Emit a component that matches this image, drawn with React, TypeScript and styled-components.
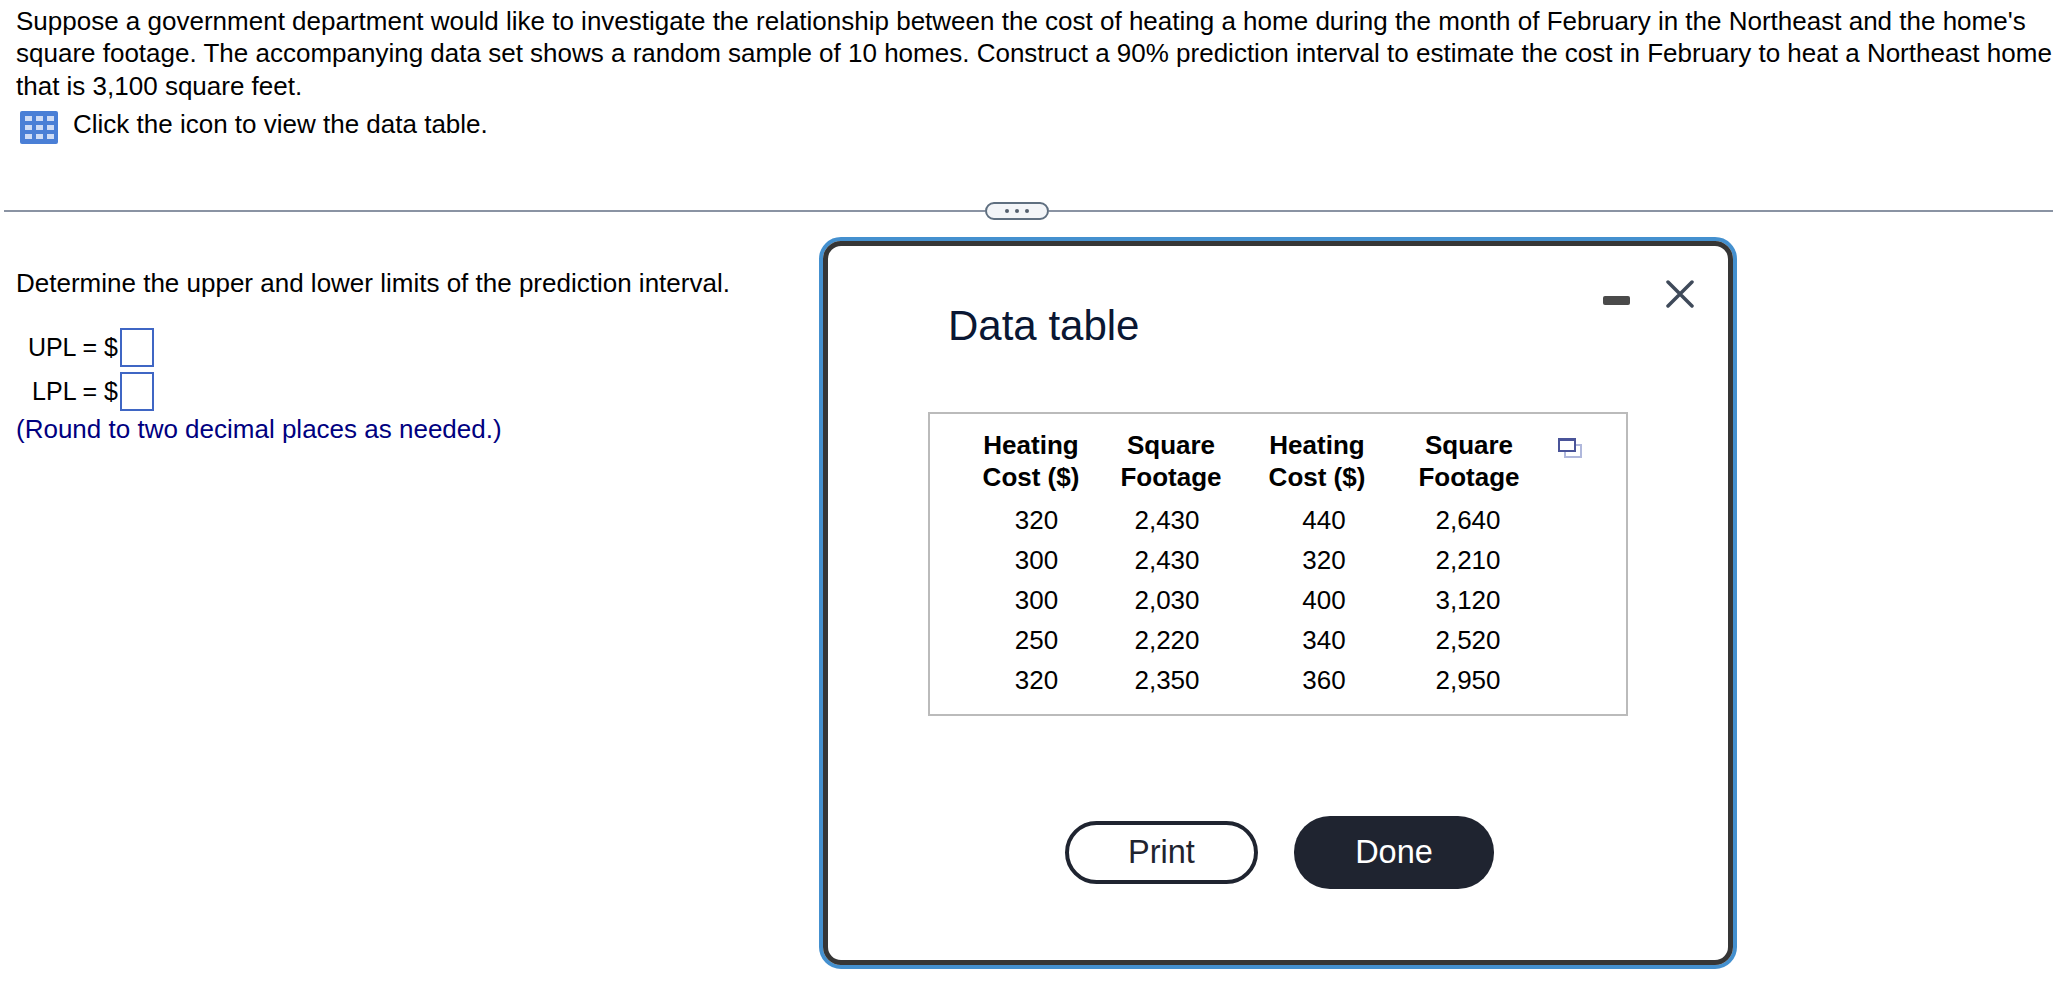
import {FC} from 'react'
import styled, {createGlobalStyle} from 'styled-components'

const GlobalStyle = createGlobalStyle`
  html, body {
    margin: 0;
    background: #fff;
    overflow: hidden;
  }
  body {
    font-family: "Liberation Sans", Arial, sans-serif;
    color: #000;
  }
`

const Page = styled.div`
  position: relative;
  width: 2053px;
  height: 991px;
  overflow: hidden;
`

const Question = styled.div`
  padding: 5px 0 0 16px;
  font-size: 26px;
  line-height: 32.25px;
  white-space: nowrap;
`

const IconLine = styled.div`
  display: flex;
  align-items: flex-start;
  gap: 15px;
  margin-top: 6px;
  padding-left: 4px;
`

const TableIconSvg = styled.svg`
  margin-top: 3px;
`

const Divider = styled.div`
  display: flex;
  align-items: center;
  margin: 58px 0 0 4px;
  height: 18px;
`

const Rule = styled.div<{$width?: number}>`
  height: 2px;
  background: #8a93a3;
  ${p => (p.$width ? `width: ${p.$width}px;` : 'flex: 1;')}
`

const Handle = styled.div`
  box-sizing: border-box;
  width: 64px;
  height: 18px;
  display: flex;
  align-items: center;
  justify-content: center;
  gap: 6px;
  background: #f3f5f8;
  border: 2px solid #5f6f80;
  border-radius: 9px;
`

const Dot = styled.span`
  width: 4px;
  height: 4px;
  border-radius: 50%;
  background: #55606e;
`

const Answer = styled.div`
  padding: 47px 0 0 16px;
  font-size: 26px;
  line-height: 32px;
`

const Limits = styled.div`
  display: grid;
  grid-template-columns: 104px 34px;
  row-gap: 5px;
  align-items: center;
  margin-top: 29px;
`

const LimitLabel = styled.div`
  text-align: right;
  padding-right: 2px;
  font-size: 25px;
`

const LimitInput = styled.div`
  box-sizing: border-box;
  width: 34px;
  height: 39px;
  border: 2px solid #3f66c4;
`

const Hint = styled.div`
  color: #000080;
  margin-top: 2px;
`

const Modal = styled.div`
  position: absolute;
  left: 819px;
  top: 237px;
  box-sizing: border-box;
  width: 918px;
  height: 732px;
  background: #fff;
  border: 4px solid #4490cf;
  border-radius: 22px;
`

const ModalInner = styled.div`
  box-sizing: border-box;
  height: 100%;
  border: 5px solid #363636;
  border-radius: 18px;
  padding: 56px 0 0 120px;
  display: flex;
  flex-direction: column;
`

const ModalHead = styled.div`
  display: flex;
  justify-content: space-between;
  align-items: flex-start;
  padding-right: 34px;
`

const Title = styled.h2`
  margin: 0;
  font-size: 42px;
  font-weight: 400;
  line-height: 48px;
  color: #0a1733;
`

const WindowActions = styled.div`
  display: flex;
  align-items: flex-start;
  gap: 36px;
  margin-top: -22px;
`

const Minimize = styled.div`
  width: 27px;
  height: 9px;
  margin-top: 16px;
  background: #4a4a4a;
  border-radius: 2px;
`

const TableBox = styled.div`
  position: relative;
  box-sizing: border-box;
  width: 700px;
  height: 304px;
  margin: 62px 0 0 -20px;
  border: 2px solid #bbb;
  padding: 15px 0 0 35px;
`

const DataGrid = styled.table`
  border-collapse: collapse;
  font-size: 26px;
  line-height: 32px;
  table-layout: fixed;
  width: 584px;
  th {
    font-weight: 700;
    text-align: center;
    padding: 0 0 7px 2px;
  }
  td {
    text-align: center;
    padding: 0;
    height: 40px;
  }
  td:nth-child(1) {
    padding-left: 13px;
  }
  td:nth-child(2) {
    padding-right: 6px;
  }
  td:nth-child(3) {
    padding-left: 16px;
  }
`

const Col = styled.col<{$width: number}>`
  width: ${p => p.$width}px;
`

const CopyIcon = styled.svg`
  position: absolute;
  left: 628px;
  top: 24px;
`

const Buttons = styled.div`
  display: flex;
  align-items: center;
  gap: 36px;
  margin: 100px 0 0 117px;
`

const Button = styled.div<{$primary?: boolean}>`
  box-sizing: border-box;
  display: flex;
  align-items: center;
  justify-content: center;
  font-size: 32.5px;
  border-radius: 36px;
  color: ${p => (p.$primary ? '#fff' : '#1f2430')};
  background: ${p => (p.$primary ? '#1f2430' : '#fff')};
  border: ${p => (p.$primary ? 'none' : '4px solid #1f2430')};
  width: ${p => (p.$primary ? 200 : 193)}px;
  height: ${p => (p.$primary ? 73 : 63)}px;
`

const columnWidths = [130, 150, 142, 162]

const rows = [
  ['320', '2,430', '440', '2,640'],
  ['300', '2,430', '320', '2,210'],
  ['300', '2,030', '400', '3,120'],
  ['250', '2,220', '340', '2,520'],
  ['320', '2,350', '360', '2,950'],
]

const TableIcon: FC = () => (
  <TableIconSvg width="38" height="33" viewBox="0 0 38 33">
    <rect width="38" height="33" rx="2" fill="#4a7fd6" />
    {[5, 14, 23].map(y =>
      [5, 16, 27].map(x => (
        <rect key={`${x}-${y}`} x={x} y={y} width="7" height="5" fill="#cfdcf5" />
      )),
    )}
  </TableIconSvg>
)

const App: FC = () => (
  <Page>
    <GlobalStyle />
    <Question>
      Suppose a government department would like to investigate the relationship between the cost of heating a home
      during the month of February in the Northeast and the home's
      <br />
      square footage. The accompanying data set shows a random sample of 10 homes. Construct a 90% prediction interval
      to estimate the cost in February to heat a Northeast home
      <br />
      that is 3,100 square feet.
      <IconLine>
        <TableIcon />
        Click the icon to view the data table.
      </IconLine>
    </Question>
    <Divider>
      <Rule $width={981} />
      <Handle>
        <Dot />
        <Dot />
        <Dot />
      </Handle>
      <Rule />
    </Divider>
    <Answer>
      Determine the upper and lower limits of the prediction interval.
      <Limits>
        <LimitLabel>UPL = $</LimitLabel>
        <LimitInput />
        <LimitLabel>LPL = $</LimitLabel>
        <LimitInput />
      </Limits>
      <Hint>(Round to two decimal places as needed.)</Hint>
    </Answer>
    <Modal>
      <ModalInner>
        <ModalHead>
          <Title>Data table</Title>
          <WindowActions>
            <Minimize />
            <svg width="28" height="28" viewBox="0 0 28 28">
              <path d="M2 2 L26 26 M26 2 L2 26" stroke="#3f4a5a" strokeWidth="3.5" strokeLinecap="round" />
            </svg>
          </WindowActions>
        </ModalHead>
        <TableBox>
          <DataGrid>
            <colgroup>
              {columnWidths.map((width, i) => (
                <Col key={`col-${i}`} $width={width} />
              ))}
            </colgroup>
            <thead>
              <tr>
                <th>Heating<br />Cost ($)</th>
                <th>Square<br />Footage</th>
                <th>Heating<br />Cost ($)</th>
                <th>Square<br />Footage</th>
              </tr>
            </thead>
            <tbody>
              {rows.map((row, i) => (
                <tr key={`row-${i}`}>
                  {row.map((cell, j) => (
                    <td key={`cell-${i}-${j}`}>{cell}</td>
                  ))}
                </tr>
              ))}
            </tbody>
          </DataGrid>
          <CopyIcon width="24" height="20" viewBox="0 0 24 20">
            <rect x="7" y="7" width="16" height="12" fill="#fff" stroke="#b0b8dc" strokeWidth="2" />
            <rect x="1" y="1" width="16" height="12" fill="#fff" stroke="#4a5499" strokeWidth="2" />
            <rect x="0" y="0" width="18" height="3" fill="#4a5499" />
          </CopyIcon>
        </TableBox>
        <Buttons>
          <Button>Print</Button>
          <Button $primary>Done</Button>
        </Buttons>
      </ModalInner>
    </Modal>
  </Page>
)

export default App
